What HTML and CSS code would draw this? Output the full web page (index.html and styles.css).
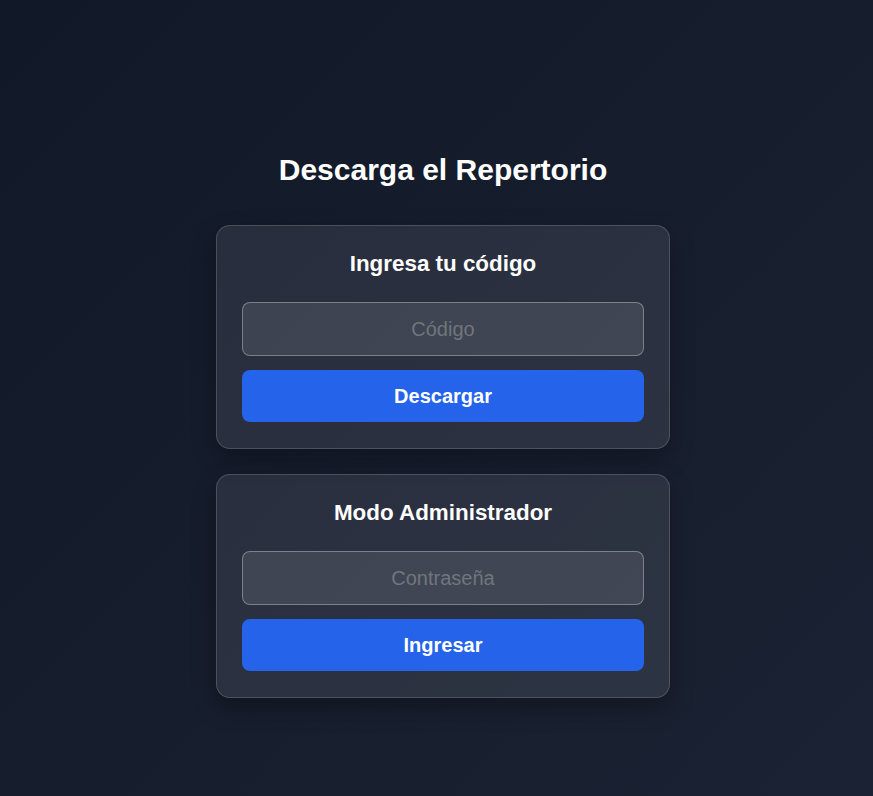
FILE: index.html
```html
<!DOCTYPE html>
<html lang="es">
<head>
<meta charset="utf-8">
<title>Descarga el Repertorio</title>
<link rel="stylesheet" href="styles.css">
</head>
<body>
<main class="page">
  <h1 class="title">Descarga el Repertorio</h1>
  <section class="card">
    <h2 class="card-title">Ingresa tu código</h2>
    <input class="field" type="text" placeholder="Código">
    <button class="btn" type="button">Descargar</button>
  </section>
  <section class="card">
    <h2 class="card-title">Modo Administrador</h2>
    <input class="field" type="password" placeholder="Contraseña">
    <button class="btn" type="button">Ingresar</button>
  </section>
</main>
</body>
</html>
```
FILE: styles.css
```css
html, body {
  margin: 0;
  padding: 0;
}
body {
  min-height: 100vh;
  background: linear-gradient(135deg, #111827 0%, #1b2233 100%);
  font-family: "Liberation Sans", Arial, sans-serif;
  color: #ffffff;
}
.page {
  display: flex;
  flex-direction: column;
  align-items: center;
  padding: 152px 0 0 13px;
}
.title {
  margin: 0 0 37px;
  font-size: 30px;
  line-height: 36px;
  font-weight: 700;
  text-align: center;
}
.card {
  box-sizing: border-box;
  width: 454px;
  padding: 25px 25px 26px;
  margin-bottom: 25px;
  display: flex;
  flex-direction: column;
  background: rgba(255, 255, 255, 0.085);
  border: 1px solid rgba(255, 255, 255, 0.16);
  border-radius: 14px;
  box-shadow: 0 10px 25px rgba(0, 0, 0, 0.3);
}
.card-title {
  margin: 0 0 25px;
  font-size: 22.4px;
  line-height: 26px;
  font-weight: 700;
  text-align: center;
}
.field {
  box-sizing: border-box;
  height: 54px;
  width: 100%;
  margin: 0 0 14px;
  padding: 0 12px;
  background: rgba(255, 255, 255, 0.1);
  border: 1px solid rgba(255, 255, 255, 0.32);
  border-radius: 8px;
  color: #ffffff;
  font-family: "Liberation Sans", Arial, sans-serif;
  font-size: 20px;
  text-align: center;
  outline: none;
}
.field::placeholder {
  color: #72757c;
}
.btn {
  height: 52px;
  width: 100%;
  border: none;
  border-radius: 8px;
  background: #2563eb;
  color: #ffffff;
  font-family: "Liberation Sans", Arial, sans-serif;
  font-size: 20px;
  font-weight: 700;
  cursor: pointer;
}
```
